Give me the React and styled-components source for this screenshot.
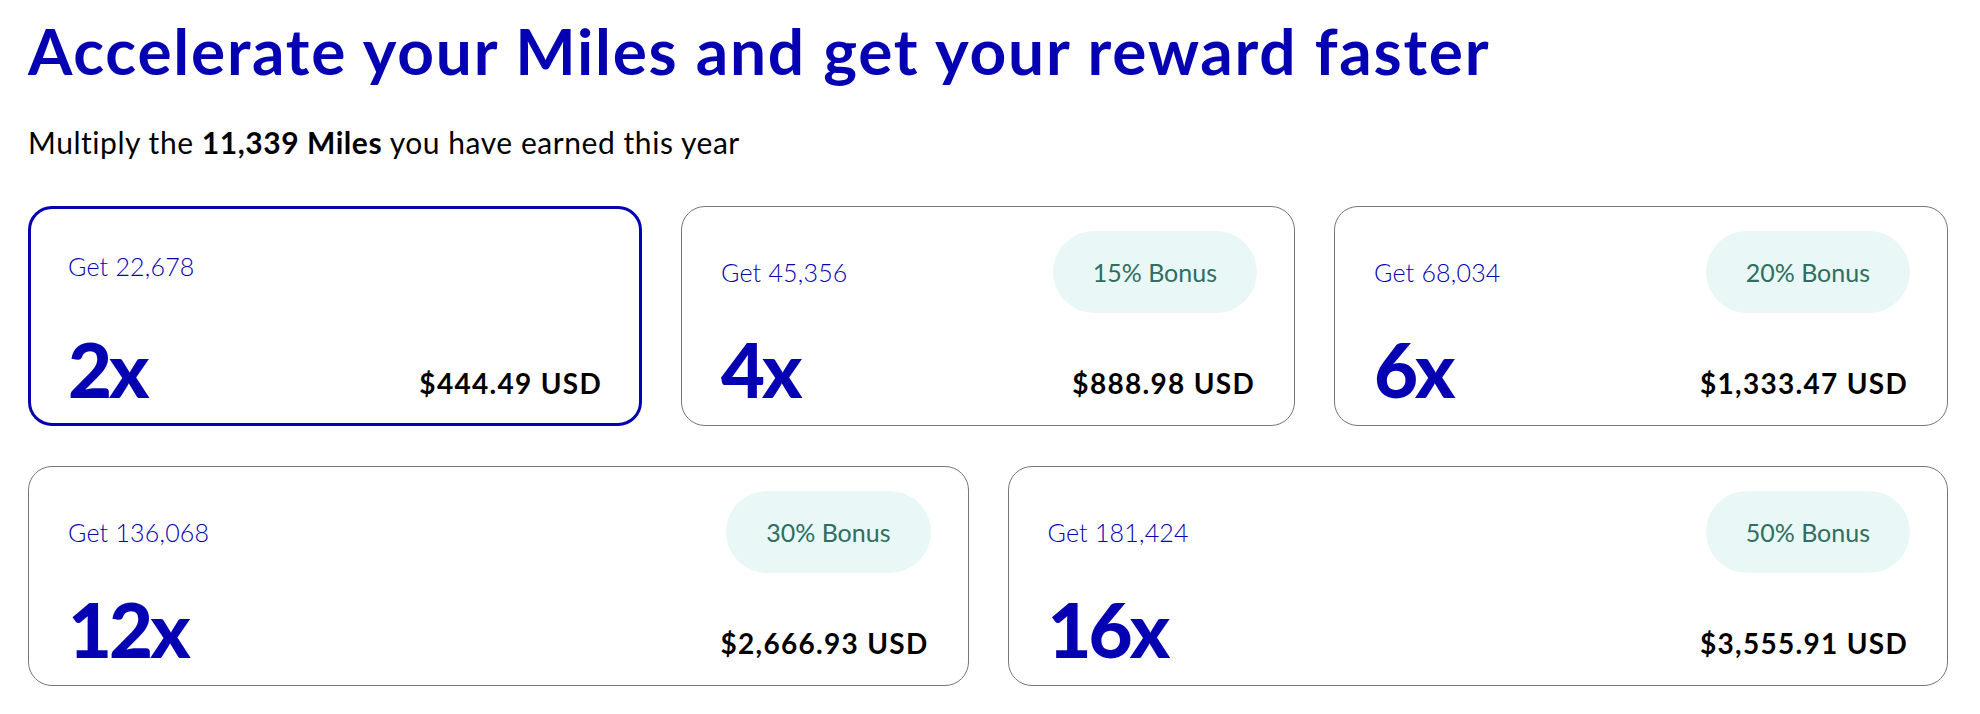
import React from 'react';
import styled, { createGlobalStyle } from 'styled-components';

const GlobalStyle = createGlobalStyle`
  * {
    box-sizing: border-box;
  }

  body {
    margin: 0;
    background: #ffffff;
    font-family: Lato, 'Open Sans', sans-serif;
    color: #000000;
  }
`

const BRAND_BLUE = '#0600b3';

const Page = styled.div`
  padding: 13px 32px 28px 28px;
`

const Title = styled.h1`
  margin: 0;
  font-size: 64px;
  line-height: 1.2;
  font-weight: 700;
  color: ${BRAND_BLUE};
  letter-spacing: 1.75px;
`

const Subtitle = styled.p`
  margin: 34px 0 0;
  font-size: 30px;
  line-height: 1.2;
  font-weight: 400;
  letter-spacing: 0.55px;

  strong {
    font-weight: 700;
  }
`

const OfferGrid = styled.div`
  display: grid;
  grid-template-columns: repeat(6, 1fr);
  gap: 40px 39px;
  margin-top: 46px;
`

const Card = styled.div`
  grid-column: span ${({ $span }) => $span};
  height: 220px;
  display: flex;
  flex-direction: column;
  justify-content: space-between;
  border: ${({ $selected }) => ($selected ? `3px solid ${BRAND_BLUE}` : '1px solid #767676')};
  border-radius: 24px;
  padding: ${({ $selected }) => {
    const bw = $selected ? 3 : 1;
    return `${25 - bw}px ${38 - bw}px ${19 - bw}px ${40 - bw}px`;
  }};
  background: #ffffff;
`

const TopRow = styled.div`
  display: flex;
  justify-content: space-between;
  align-items: center;
  min-height: 70px;
`

const MilesLabel = styled.span`
  font-size: 25px;
  font-weight: 300;
  color: ${BRAND_BLUE};
  letter-spacing: 0.2px;
`

const BonusPill = styled.span`
  display: inline-flex;
  align-items: center;
  height: 82px;
  padding: 0 40px;
  border-radius: 41px;
  background: #e9f8f7;
  color: #2f6e61;
  font-size: 25px;
  font-weight: 400;
`

const BottomRow = styled.div`
  display: flex;
  justify-content: space-between;
  align-items: flex-end;
  padding-right: 2px;
`

const Multiplier = styled.span`
  font-size: 76px;
  line-height: 1;
  font-weight: 900;
  color: ${BRAND_BLUE};
  letter-spacing: -3px;
`

const Price = styled.span`
  font-size: 28px;
  line-height: 1;
  font-weight: 700;
  letter-spacing: 1.3px;
  padding-bottom: 10px;
`

const offers = [
  { miles: '22,678', factor: '2x', price: '$444.49 USD', span: 2, selected: true },
  { miles: '45,356', factor: '4x', price: '$888.98 USD', bonus: '15% Bonus', span: 2 },
  { miles: '68,034', factor: '6x', price: '$1,333.47 USD', bonus: '20% Bonus', span: 2 },
  { miles: '136,068', factor: '12x', price: '$2,666.93 USD', bonus: '30% Bonus', span: 3 },
  { miles: '181,424', factor: '16x', price: '$3,555.91 USD', bonus: '50% Bonus', span: 3 },
];

const App = () => {
  return (
    <Page>
      <GlobalStyle />
      <Title>Accelerate your Miles and get your reward faster</Title>
      <Subtitle>
        Multiply the <strong>11,339 Miles</strong> you have earned this year
      </Subtitle>
      <OfferGrid>
        {offers.map((offer) => (
          <Card key={offer.factor} $span={offer.span} $selected={offer.selected}>
            <TopRow>
              <MilesLabel>Get {offer.miles}</MilesLabel>
              {offer.bonus && <BonusPill>{offer.bonus}</BonusPill>}
            </TopRow>
            <BottomRow>
              <Multiplier>{offer.factor}</Multiplier>
              <Price>{offer.price}</Price>
            </BottomRow>
          </Card>
        ))}
      </OfferGrid>
    </Page>
  );
}

export default App;
